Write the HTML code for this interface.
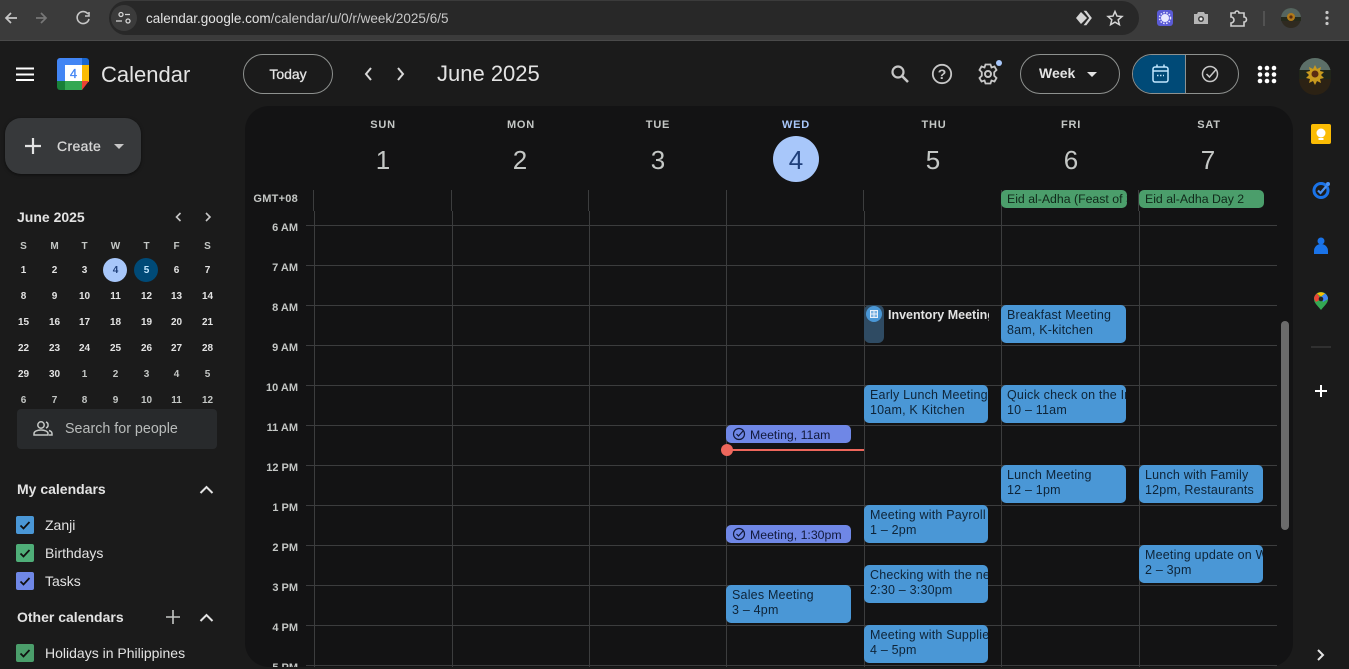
<!DOCTYPE html>
<html><head><meta charset="utf-8"><style>
*{box-sizing:border-box}
html,body{margin:0;width:1349px;height:669px;overflow:hidden;background:#1b1b1b;font-family:"Liberation Sans",sans-serif;color:#e3e3e3}
#root{position:absolute;left:0;top:0;width:1349px;height:669px;overflow:hidden;background:#1b1b1b}
.a{position:absolute}
.t{position:absolute;white-space:nowrap;line-height:1}
svg{position:absolute;overflow:visible}
.vl{position:absolute;width:1px;background:#3c3d3e;top:211px;height:456px}
.vh{position:absolute;width:1px;background:#3c3d3e;top:190px;height:21px}
.hl{position:absolute;height:1px;background:#3c3d3e;left:306px;width:971px}
.tm{position:absolute;width:54px;left:244px;text-align:right;font-size:11px;font-weight:bold;color:#c4c7c5;line-height:12px}
.dn{position:absolute;width:80px;text-align:center;font-size:11px;font-weight:bold;color:#c4c7c5;top:119px;letter-spacing:.8px;line-height:12px}
.dd{position:absolute;width:80px;text-align:center;font-size:26px;color:#c4c7c5;top:145px;line-height:30px}
.m{position:absolute;width:31px;text-align:center;font-size:10px;font-weight:bold;color:#e3e3e3;line-height:12px;margin-top:1px}
.ev{position:absolute;background:#4a97d6;border-radius:5px;color:#0e2438;font-size:12.5px;letter-spacing:.2px;line-height:15px;padding:3px 0 0 6px;overflow:hidden;white-space:nowrap;height:38px;width:125px}
.tk{position:absolute;background:#6f87e6;border-radius:5px;color:#11193a;font-size:12.3px;line-height:20px;height:18px;width:125px;left:726px;padding-left:24px;white-space:nowrap;overflow:hidden}
.ad{position:absolute;background:#4b9e6b;border-radius:5px;color:#10291a;font-size:12.3px;line-height:18px;height:18px;top:190px;padding-left:6px;overflow:hidden;white-space:nowrap}
.cb{position:absolute;left:16px;width:18px;height:18px;border-radius:2px}
.cl{position:absolute;left:45px;font-size:14px;line-height:16px;color:#e3e3e3;white-space:nowrap}
.med{font-weight:normal;-webkit-text-stroke:.3px currentColor}
</style></head><body><div id="root">

<div class="a" style="left:0;top:0;width:1349px;height:41px;background:#3b3b3b;border-bottom:1px solid #4a4a4a"></div>
<div class="a" style="left:109px;top:1px;width:1030px;height:34px;background:#282828;border-radius:17px"></div>
<div class="a" style="left:111px;top:5px;width:26px;height:26px;background:#3b3b3b;border-radius:50%"></div>
<svg style="left:0;top:0" width="1349" height="41" fill="none">
<path d="M17 18H6M11 13l-5 5 5 5" stroke="#c7c7c7" stroke-width="1.700"/>
<path d="M36 18H46M41 13l5 5-5 5" stroke="#777" stroke-width="1.700"/>
<path d="M88 14a6 6 0 1 0 1 5M89 12v4h-4" stroke="#c7c7c7" stroke-width="1.600"/>
<g stroke="#d5d5d5" stroke-width="1.300"><circle cx="121" cy="14.500" r="2"/><path d="M125 14.500h5M116 21h6"/><circle cx="128" cy="21" r="2"/></g>
<path d="M1081 12l6 6-6 6-5-6z" fill="#d5d5d5"/><path d="M1085 11.500h1l5 6.500-5 6.500h-1l5-6.500z" stroke="#d5d5d5" stroke-width="1.400"/>
<path d="M1115 11.500l2 4.600 5 .4-3.800 3.300 1.200 4.900-4.400-2.600-4.400 2.600 1.200-4.900-3.800-3.300 5-.4z" stroke="#d5d5d5" stroke-width="1.500"/>
<rect x="1157" y="10" width="16" height="16" rx="3" fill="#5b5bd6"/><circle cx="1165" cy="18" r="4" fill="#e8e8ff"/><circle cx="1165" cy="18" r="5.500" stroke="#e8e8ff" stroke-dasharray="1.500 1.500" stroke-width="1.500"/>
<path d="M1194 14h3l1-2h6l1 2h3v10h-14z" fill="#b5b5b5"/><circle cx="1201" cy="19" r="3" fill="#3b3b3b"/><circle cx="1201" cy="19" r="1.500" fill="#eee"/>
<path d="M1231 13h4a2 2 0 0 1 4 0h5v4a2 2 0 0 1 0 5v4h-13v-3a2 2 0 0 0 0-6z" stroke="#d0d0d0" stroke-width="1.600"/>
<path d="M1264 11v15" stroke="#5a5a5a" stroke-width="1.500"/>
<circle cx="1291" cy="18" r="10" fill="#2f2a20"/><path d="M1281 18a10 10 0 0 1 20 0z" fill="#55655f"/><path d="M1281 17h20v4h-20z" fill="#252a1c"/><circle cx="1291" cy="17" r="4" fill="#b07a1a"/><circle cx="1291" cy="17" r="1.600" fill="#5a2c10"/>
<g fill="#c7c7c7"><circle cx="1327" cy="12.500" r="1.600"/><circle cx="1327" cy="18" r="1.600"/><circle cx="1327" cy="23.500" r="1.600"/></g>
</svg>
<div class="t" style="left:146px;top:11px;font-size:13.5px;color:#e3e3e3;line-height:15px">calendar.google.com<span style="color:#c7c7c7">/calendar/u/0/r/week/2025/6/5</span></div>

<svg style="left:0;top:42px" width="1349" height="70" fill="none">
<path d="M16 26.500h18M16 32.500h18M16 38h18" stroke="#fff" stroke-width="2"/>
<path d="M60 16h22v7H65v17h-8V19a3 3 0 0 1 3-3z" fill="#4285f4"/>
<path d="M82 16h4a3 3 0 0 1 3 3v4h-7z" fill="#1967d2"/>
<path d="M82 23h7v17h-7z" fill="#fbbc04"/>
<path d="M65 39h17v9H65z" fill="#34a853"/><path d="M57 39h8v9h-5a3 3 0 0 1-3-3z" fill="#188038"/>
<path d="M82 39h7l-7 9z" fill="#ea4335"/>
<rect x="65" y="23" width="17" height="16" fill="#fff"/>
<path d="M371 26l-5 6 5 6M398 26l5 6-5 6" stroke="#d8d8d8" stroke-width="2"/>
<circle cx="898" cy="30" r="5.500" stroke="#c7c7c7" stroke-width="2.200"/><path d="M902 34l6 6" stroke="#c7c7c7" stroke-width="2.600"/>
<circle cx="942" cy="32" r="9.200" stroke="#c7c7c7" stroke-width="1.800"/>
<path d="M985.500 22.500h5l1 3 3-1 2 3.500-2.300 2.200v3.600l2.300 2.200-2 3.500-3-1-1 3h-5l-1-3-3 1-2-3.500 2.300-2.200v-3.600l-2.300-2.200 2-3.500 3 1z" stroke="#c7c7c7" stroke-width="1.800"/><circle cx="988" cy="32" r="3" stroke="#c7c7c7" stroke-width="2"/>
<circle cx="999" cy="21" r="3" fill="#a8c7fa"/>
<path d="M1087 30h10l-5 5z" fill="#e3e3e3"/>
<g fill="#fff"><circle cx="1260" cy="26" r="2.300"/><circle cx="1267" cy="26" r="2.300"/><circle cx="1274" cy="26" r="2.300"/><circle cx="1260" cy="32.500" r="2.300"/><circle cx="1267" cy="32.500" r="2.300"/><circle cx="1274" cy="32.500" r="2.300"/><circle cx="1260" cy="39" r="2.300"/><circle cx="1267" cy="39" r="2.300"/><circle cx="1274" cy="39" r="2.300"/></g>
<circle cx="1315" cy="32" r="16" fill="#2a2418"/><path d="M1299 32a16 16 0 0 1 32 0z" fill="#5c6f68"/><path d="M1299 28h32v9h-32z" fill="#20251a"/><path d="M1299 37a16 16 0 0 0 32 0z" fill="#2c2214"/>
<path d="M1315 23l2 4 4-2-1 4 4 1-3 3 3 3-4 1 1 4-4-2-2 4-2-4-4 2 1-4-4-1 3-3-3-3 4-1-1-4 4 2z" fill="#c99a1e"/><circle cx="1315" cy="32" r="3.500" fill="#5a2a12"/>
</svg>
<div class="t" style="left:65px;top:66px;width:17px;text-align:center;font-size:13px;color:#4285f4;line-height:15px;-webkit-text-stroke:.3px #4285f4">4</div>
<div class="t" style="left:101px;top:61px;font-size:22px;line-height:27px;color:#e3e3e3">Calendar</div>
<div class="a med" style="left:243px;top:54px;width:90px;height:40px;border:1px solid #8e918f;border-radius:20px;text-align:center;font-size:14px;line-height:38px;color:#e3e3e3;-webkit-text-stroke:.3px #e3e3e3">Today</div>
<div class="t" style="left:437px;top:60px;font-size:22px;line-height:28px;color:#e3e3e3">June 2025</div>
<div class="t" style="left:936px;top:66px;width:12px;text-align:center;font-size:14px;font-weight:bold;color:#c7c7c7;line-height:16px">?</div>
<div class="a" style="left:1020px;top:54px;width:100px;height:40px;border:1px solid #8e918f;border-radius:20px;font-size:14px;font-weight:bold;line-height:37px;padding-left:18px;color:#e3e3e3">Week</div>
<div class="a" style="left:1132px;top:54px;width:107px;height:40px;border:1px solid #8e918f;border-radius:20px;overflow:hidden"><div style="width:53px;height:40px;background:#004a77;border-right:1px solid #8e918f"></div></div>
<svg style="left:1132px;top:54px" width="107" height="40" fill="none">
<rect x="21" y="13" width="15" height="15" rx="2" stroke="#c2e7ff" stroke-width="1.500"/><path d="M21 17h15M25 10.500v3M32 10.500v3" stroke="#c2e7ff" stroke-width="1.500"/><path d="M25 21.500h7" stroke="#c2e7ff" stroke-width="1.500" stroke-dasharray="1.500 1.500"/>
<circle cx="78" cy="20" r="7.500" stroke="#c7c7c7" stroke-width="1.500"/><path d="M74.500 20l3 3 7-8" stroke="#c7c7c7" stroke-width="1.500"/>
</svg>

<div class="a" style="left:245px;top:106px;width:1048px;height:561px;background:#131314;border-radius:24px"></div>

<div class="a" style="left:5px;top:118px;width:136px;height:56px;background:#37393b;border-radius:16px;box-shadow:0 1px 3px #0008"></div>
<svg style="left:0;top:118px" width="140" height="56" fill="none"><path d="M33 20v16M25 28h16" stroke="#e3e3e3" stroke-width="2.200"/><path d="M114 26h10l-5 5z" fill="#c7c7c7"/></svg>
<div class="t med" style="left:57px;top:138px;font-size:14px;color:#d6d6d6;line-height:16px;letter-spacing:.35px">Create</div>

<div class="t" style="left:17px;top:209px;font-size:14px;font-weight:bold;color:#e3e3e3;line-height:16px">June 2025</div>
<svg style="left:0;top:200px" width="240" height="40" fill="none"><path d="M180.500 13l-4 4 4 4M206 13l4 4-4 4" stroke="#c7c7c7" stroke-width="1.600"/></svg>
<div class="a" style="left:103px;top:258px;width:24px;height:24px;background:#a8c7fa;border-radius:50%"></div>
<div class="a" style="left:134px;top:258px;width:24px;height:24px;background:#004a77;border-radius:50%"></div>
<div id="mini"><div class="m" style="left:8px;top:240px;color:#c4c7c5">S</div><div class="m" style="left:39px;top:240px;color:#c4c7c5">M</div><div class="m" style="left:69px;top:240px;color:#c4c7c5">T</div><div class="m" style="left:100px;top:240px;color:#c4c7c5">W</div><div class="m" style="left:131px;top:240px;color:#c4c7c5">T</div><div class="m" style="left:161px;top:240px;color:#c4c7c5">F</div><div class="m" style="left:192px;top:240px;color:#c4c7c5">S</div>
<div class="m" style="left:8px;top:264px">1</div><div class="m" style="left:39px;top:264px">2</div><div class="m" style="left:69px;top:264px">3</div><div class="m" style="left:100px;top:264px;color:#1f3f7a">4</div><div class="m" style="left:131px;top:264px;color:#c2e7ff">5</div><div class="m" style="left:161px;top:264px">6</div><div class="m" style="left:192px;top:264px">7</div>
<div class="m" style="left:8px;top:290px">8</div><div class="m" style="left:39px;top:290px">9</div><div class="m" style="left:69px;top:290px">10</div><div class="m" style="left:100px;top:290px">11</div><div class="m" style="left:131px;top:290px">12</div><div class="m" style="left:161px;top:290px">13</div><div class="m" style="left:192px;top:290px">14</div>
<div class="m" style="left:8px;top:316px">15</div><div class="m" style="left:39px;top:316px">16</div><div class="m" style="left:69px;top:316px">17</div><div class="m" style="left:100px;top:316px">18</div><div class="m" style="left:131px;top:316px">19</div><div class="m" style="left:161px;top:316px">20</div><div class="m" style="left:192px;top:316px">21</div>
<div class="m" style="left:8px;top:342px">22</div><div class="m" style="left:39px;top:342px">23</div><div class="m" style="left:69px;top:342px">24</div><div class="m" style="left:100px;top:342px">25</div><div class="m" style="left:131px;top:342px">26</div><div class="m" style="left:161px;top:342px">27</div><div class="m" style="left:192px;top:342px">28</div>
<div class="m" style="left:8px;top:368px">29</div><div class="m" style="left:39px;top:368px">30</div><div class="m" style="left:69px;top:368px;color:#c4c7c5">1</div><div class="m" style="left:100px;top:368px;color:#c4c7c5">2</div><div class="m" style="left:131px;top:368px;color:#c4c7c5">3</div><div class="m" style="left:161px;top:368px;color:#c4c7c5">4</div><div class="m" style="left:192px;top:368px;color:#c4c7c5">5</div>
<div class="m" style="left:8px;top:394px;color:#c4c7c5">6</div><div class="m" style="left:39px;top:394px;color:#c4c7c5">7</div><div class="m" style="left:69px;top:394px;color:#c4c7c5">8</div><div class="m" style="left:100px;top:394px;color:#c4c7c5">9</div><div class="m" style="left:131px;top:394px;color:#c4c7c5">10</div><div class="m" style="left:161px;top:394px;color:#c4c7c5">11</div><div class="m" style="left:192px;top:394px;color:#c4c7c5">12</div></div>

<div class="a" style="left:17px;top:409px;width:200px;height:40px;background:#282a2c;border-radius:4px"></div>
<svg style="left:33px;top:420px" width="20" height="18" fill="none" stroke="#c4c7c5" stroke-width="1.500"><circle cx="8" cy="5" r="3.200"/><path d="M1 15v-1.500c0-2 3-3.500 7-3.500s7 1.500 7 3.500V15zM13 2a3.200 3.200 0 0 1 0 6M16 10.500c1.700.5 3 1.500 3 3V15h-3"/></svg>
<div class="t" style="left:65px;top:421px;font-size:14.3px;color:#b9bcbb;line-height:17px">Search for people</div>

<div class="t" style="left:17px;top:481px;font-size:14px;font-weight:bold;color:#e3e3e3;line-height:16px">My calendars</div>
<div class="t" style="left:17px;top:609px;font-size:14px;font-weight:bold;color:#e3e3e3;line-height:16px">Other calendars</div>
<svg style="left:0;top:480px" width="240" height="160" fill="none"><path d="M200.500 13l6-6 6 6M200.500 141l6-6 6 6" stroke="#e3e3e3" stroke-width="2"/><path d="M173 130v14M166 137h14" stroke="#c4c7c5" stroke-width="1.600"/></svg>
<div class="cb" style="top:516px;background:#4a97d6"></div><div class="cl" style="top:517px">Zanji</div>
<div class="cb" style="top:544px;background:#4fae78"></div><div class="cl" style="top:545px">Birthdays</div>
<div class="cb" style="top:572px;background:#6f87e6"></div><div class="cl" style="top:573px">Tasks</div>
<div class="cb" style="top:644px;background:#4b9e6b"></div><div class="cl" style="top:645px">Holidays in Philippines</div>
<svg style="left:16px;top:516px" width="18" height="146" fill="none" stroke="#111" stroke-width="1.800"><path d="M4.500 9.500l3 3 6-6.500M4.500 37.500l3 3 6-6.500M4.500 65.500l3 3 6-6.500M4.500 137.500l3 3 6-6.500"/></svg>

<div class="dn" style="left:343px">SUN</div><div class="dn" style="left:481px">MON</div><div class="dn" style="left:618px">TUE</div><div class="dn" style="left:756px;color:#a8c7fa">WED</div><div class="dn" style="left:894px">THU</div><div class="dn" style="left:1031px">FRI</div><div class="dn" style="left:1169px">SAT</div>
<div class="a" style="left:773px;top:136px;width:46px;height:46px;background:#a8c7fa;border-radius:50%"></div>
<div class="dd" style="left:343px">1</div><div class="dd" style="left:480px">2</div><div class="dd" style="left:618px">3</div><div class="dd" style="left:756px;color:#1f3f7a">4</div><div class="dd" style="left:893px">5</div><div class="dd" style="left:1031px">6</div><div class="dd" style="left:1168px">7</div>
<div class="tm" style="top:193px;left:244px;letter-spacing:.25px">GMT+08</div>
<div class="vh" style="left:313px"></div><div class="vh" style="left:451px"></div><div class="vh" style="left:588px"></div><div class="vh" style="left:726px"></div><div class="vh" style="left:863px"></div><div class="vh" style="left:1001px"></div><div class="vh" style="left:1138px"></div>
<div class="vl" style="left:314px"></div><div class="vl" style="left:452px"></div><div class="vl" style="left:589px"></div><div class="vl" style="left:726px"></div><div class="vl" style="left:864px"></div><div class="vl" style="left:1001px"></div><div class="vl" style="left:1139px"></div>
<div class="hl" style="top:225px"></div><div class="hl" style="top:265px"></div><div class="hl" style="top:305px"></div><div class="hl" style="top:345px"></div><div class="hl" style="top:385px"></div><div class="hl" style="top:425px"></div><div class="hl" style="top:465px"></div><div class="hl" style="top:505px"></div><div class="hl" style="top:545px"></div><div class="hl" style="top:585px"></div><div class="hl" style="top:625px"></div><div class="hl" style="top:665px"></div>
<div class="tm" style="top:222px">6 AM</div><div class="tm" style="top:262px">7 AM</div><div class="tm" style="top:302px">8 AM</div><div class="tm" style="top:342px">9 AM</div><div class="tm" style="top:382px">10 AM</div><div class="tm" style="top:422px">11 AM</div><div class="tm" style="top:462px">12 PM</div><div class="tm" style="top:502px">1 PM</div><div class="tm" style="top:542px">2 PM</div><div class="tm" style="top:582px">3 PM</div><div class="tm" style="top:622px">4 PM</div><div class="tm" style="top:662px">5 PM</div>

<div class="ad" style="left:1001px;width:126px">Eid al-Adha (Feast of Sacrifice)</div>
<div class="ad" style="left:1139px;width:125px">Eid al-Adha Day 2</div>

<div class="a" style="left:864px;top:305px;width:20px;height:38px;background:#2f4b63;border-radius:6px"></div>
<div class="a" style="left:866px;top:306px;width:16px;height:16px;background:#4a97d6;border-radius:50%"></div>
<svg style="left:866px;top:306px" width="16" height="16" fill="none" stroke="#e8f0fa" stroke-width="1"><rect x="4.500" y="4.500" width="7" height="7" fill="#e8f0fa" fill-opacity=".3"/><path d="M8 4.500v7M4.500 8h7"/></svg>
<div class="a" style="left:888px;top:308px;width:101px;overflow:hidden;white-space:nowrap;font-size:12.5px;font-weight:bold;line-height:15px;color:#e3e3e3">Inventory Meeting</div>

<div class="ev" style="left:864px;top:385px;width:124px">Early Lunch Meeting<br>10am, K Kitchen</div>
<div class="ev" style="left:1001px;top:305px">Breakfast Meeting<br>8am, K-kitchen</div>
<div class="ev" style="left:1001px;top:385px">Quick check on the Inventory<br>10 – 11am</div>
<div class="ev" style="left:1001px;top:465px">Lunch Meeting<br>12 – 1pm</div>
<div class="ev" style="left:1139px;top:465px;width:124px">Lunch with Family<br>12pm, Restaurants</div>
<div class="ev" style="left:1139px;top:545px;width:124px">Meeting update on Work<br>2 – 3pm</div>
<div class="ev" style="left:864px;top:505px;width:124px">Meeting with Payroll<br>1 – 2pm</div>
<div class="ev" style="left:864px;top:565px;width:124px">Checking with the new<br>2:30 – 3:30pm</div>
<div class="ev" style="left:864px;top:625px;width:124px">Meeting with Suppliers<br>4 – 5pm</div>
<div class="ev" style="left:726px;top:585px">Sales Meeting<br>3 – 4pm</div>
<div class="tk" style="top:425px">Meeting, 11am</div>
<div class="tk" style="top:525px">Meeting, 1:30pm</div>
<svg style="left:726px;top:425px" width="30" height="120" fill="none" stroke="#11193a" stroke-width="1.200"><circle cx="13" cy="9" r="5.500"/><path d="M10.500 9l2 2 5-5.500"/><circle cx="13" cy="109" r="5.500"/><path d="M10.500 109l2 2 5-5.500"/></svg>
<div class="a" style="left:727px;top:449px;width:137px;height:2px;background:#ee675c"></div>
<div class="a" style="left:721px;top:444px;width:12px;height:12px;background:#ee675c;border-radius:50%"></div>

<div class="a" style="left:1281px;top:321px;width:8px;height:209px;background:#6b6b6b;border-radius:4px"></div>

<div class="a" style="left:245px;top:667px;width:1048px;height:2px;background:#1b1b1b"></div>

<svg style="left:1293px;top:106px" width="56" height="563" fill="none">
<rect x="18" y="18" width="20" height="20" rx="2" fill="#fbbc04"/><circle cx="28" cy="27" r="4.500" fill="#fff"/><rect x="25.500" y="32" width="5" height="2" fill="#fff"/>
<circle cx="28" cy="84.500" r="7" stroke="#1a73e8" stroke-width="3"/><path d="M25 84.500l2.500 2.500 6-7" stroke="#4a90f0" stroke-width="2.200"/><circle cx="35" cy="78" r="2" fill="#4a90f0"/>
<circle cx="28" cy="135" r="3.500" fill="#1a73e8"/><path d="M21 148v-3a6 6 0 0 1 14 0v3z" fill="#1a73e8"/>
<path d="M28 204c-4-5-7-7-7-11a7 7 0 0 1 14 0c0 4-3 6-7 11z" fill="#34a853"/><path d="M21 193a7 7 0 0 1 3-5.500l4 5.500-5 3z" fill="#ea4335"/><path d="M24 187.500a7 7 0 0 1 8 0l-4 3z" fill="#fbbc04"/><path d="M32 187.500a7 7 0 0 1 3 5.500l-5 3-2-5z" fill="#4285f4"/><circle cx="28" cy="193" r="2.300" fill="#222"/>
<path d="M18 241h20" stroke="#444"/>
<path d="M28 279v12M22 285h12" stroke="#fff" stroke-width="2"/>
<path d="M25 544l5 5-5 5" stroke="#e3e3e3" stroke-width="2"/>
</svg>

</div></body></html>
